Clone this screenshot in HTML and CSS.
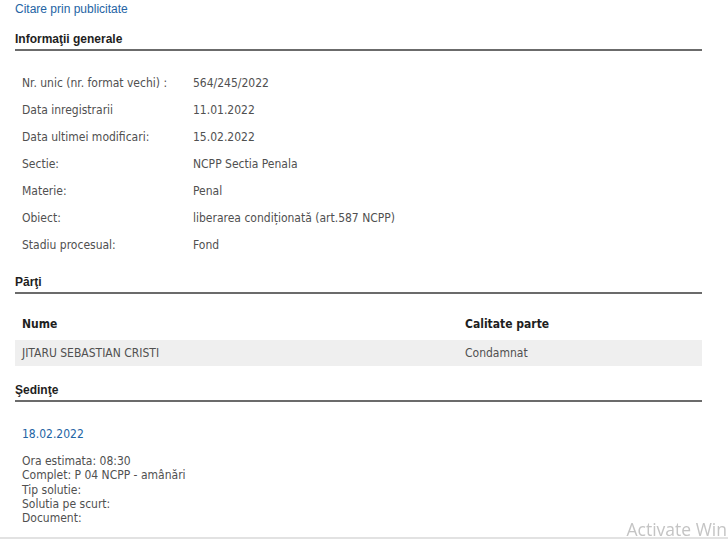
FILE: index.html
```html
<!DOCTYPE html>
<html lang="ro">
<head>
  <meta charset="UTF-8" />
  <meta name="viewport" content="width=device-width, initial-scale=1.0" />
  <title>Dosar 564/245/2022</title>
  <link rel="stylesheet" href="styles.css">
</head>
<body>
  <div class="page">
    <a class="top-link" href="#">Citare prin publicitate</a>

    <h2 class="section-title">Informaţii generale</h2>
    <div class="info-grid">
      <div class="info-label">Nr. unic (nr. format vechi) :</div>
      <div class="info-value">564/245/2022</div>
      <div class="info-label">Data inregistrarii</div>
      <div class="info-value">11.01.2022</div>
      <div class="info-label">Data ultimei modificari:</div>
      <div class="info-value">15.02.2022</div>
      <div class="info-label">Sectie:</div>
      <div class="info-value">NCPP Sectia Penala</div>
      <div class="info-label">Materie:</div>
      <div class="info-value">Penal</div>
      <div class="info-label">Obiect:</div>
      <div class="info-value">liberarea condiționată (art.587 NCPP)</div>
      <div class="info-label">Stadiu procesual:</div>
      <div class="info-value">Fond</div>
    </div>

    <h2 class="section-title">Părţi</h2>
    <table class="parti">
      <thead>
        <tr>
          <th class="col-nume">Nume</th>
          <th>Calitate parte</th>
        </tr>
      </thead>
      <tbody>
        <tr>
          <td>JITARU SEBASTIAN CRISTI</td>
          <td>Condamnat</td>
        </tr>
      </tbody>
    </table>

    <h2 class="section-title">Şedinţe</h2>
    <div class="sedinta">
      <div class="sedinta-date">18.02.2022</div>
      <div class="sedinta-details">
        Ora estimata: 08:30<br>
        Complet: P 04 NCPP - amânări<br>
        Tip solutie:<br>
        Solutia pe scurt:<br>
        Document:
      </div>
    </div>
  </div>

  <div class="watermark">Activate Win</div>
</body>
</html>
```

FILE: styles.css
```css
* {
  margin: 0;
  padding: 0;
  box-sizing: border-box;
}
html, body {
  width: 100%;
  height: 100%;
  overflow: hidden;
  background-color: #fff;
}
body {
  font-family: "DejaVu Sans Condensed", "DejaVu Sans", sans-serif;
  font-size: 12px;
  color: #505050;
}
.page {
  padding: 1px 26px 12px 15px;
  border-bottom: 2px solid #e2e2e2;
}
.top-link {
  display: block;
  font-family: "Liberation Sans", Arial, sans-serif;
  font-size: 12px;
  line-height: 16px;
  color: #2464a4;
  text-decoration: none;
}
.section-title {
  margin-top: 14px;
  padding-bottom: 2px;
  border-bottom: 2px solid #6b6b6b;
  font-family: "Liberation Sans", Arial, sans-serif;
  font-size: 12px;
  line-height: 16px;
  font-weight: bold;
  color: #1e1e1e;
}
.info-grid {
  margin-top: 18px;
  margin-bottom: 16px;
  display: grid;
  grid-template-columns: 171px 1fr;
  grid-auto-rows: 27px;
  align-items: center;
  padding-left: 7px;
}
.info-grid + .section-title {
  margin-top: 16px;
}
.parti {
  width: 100%;
  margin-top: 18px;
  border-collapse: collapse;
}
.parti th {
  height: 28px;
  padding: 0 7px 4px;
  text-align: left;
  vertical-align: middle;
  font-weight: bold;
  color: #1e1e1e;
}
.parti .col-nume {
  width: 443px;
}
.parti td {
  height: 26px;
  padding: 0 7px;
  background-color: #efefef;
  vertical-align: middle;
}
.parti + .section-title {
  margin-top: 16px;
}
.sedinta {
  padding-left: 7px;
}
.sedinta-date {
  margin-top: 24px;
  line-height: 16px;
  color: #2464a4;
}
.sedinta-details {
  margin-top: 12px;
  line-height: 14.3px;
}
.watermark {
  position: fixed;
  right: 1px;
  top: 517px;
  white-space: nowrap;
  font-family: "Open Sans", "Noto Sans", sans-serif;
  font-size: 17.5px;
  color: #c4c4c4;
  pointer-events: none;
}
```
